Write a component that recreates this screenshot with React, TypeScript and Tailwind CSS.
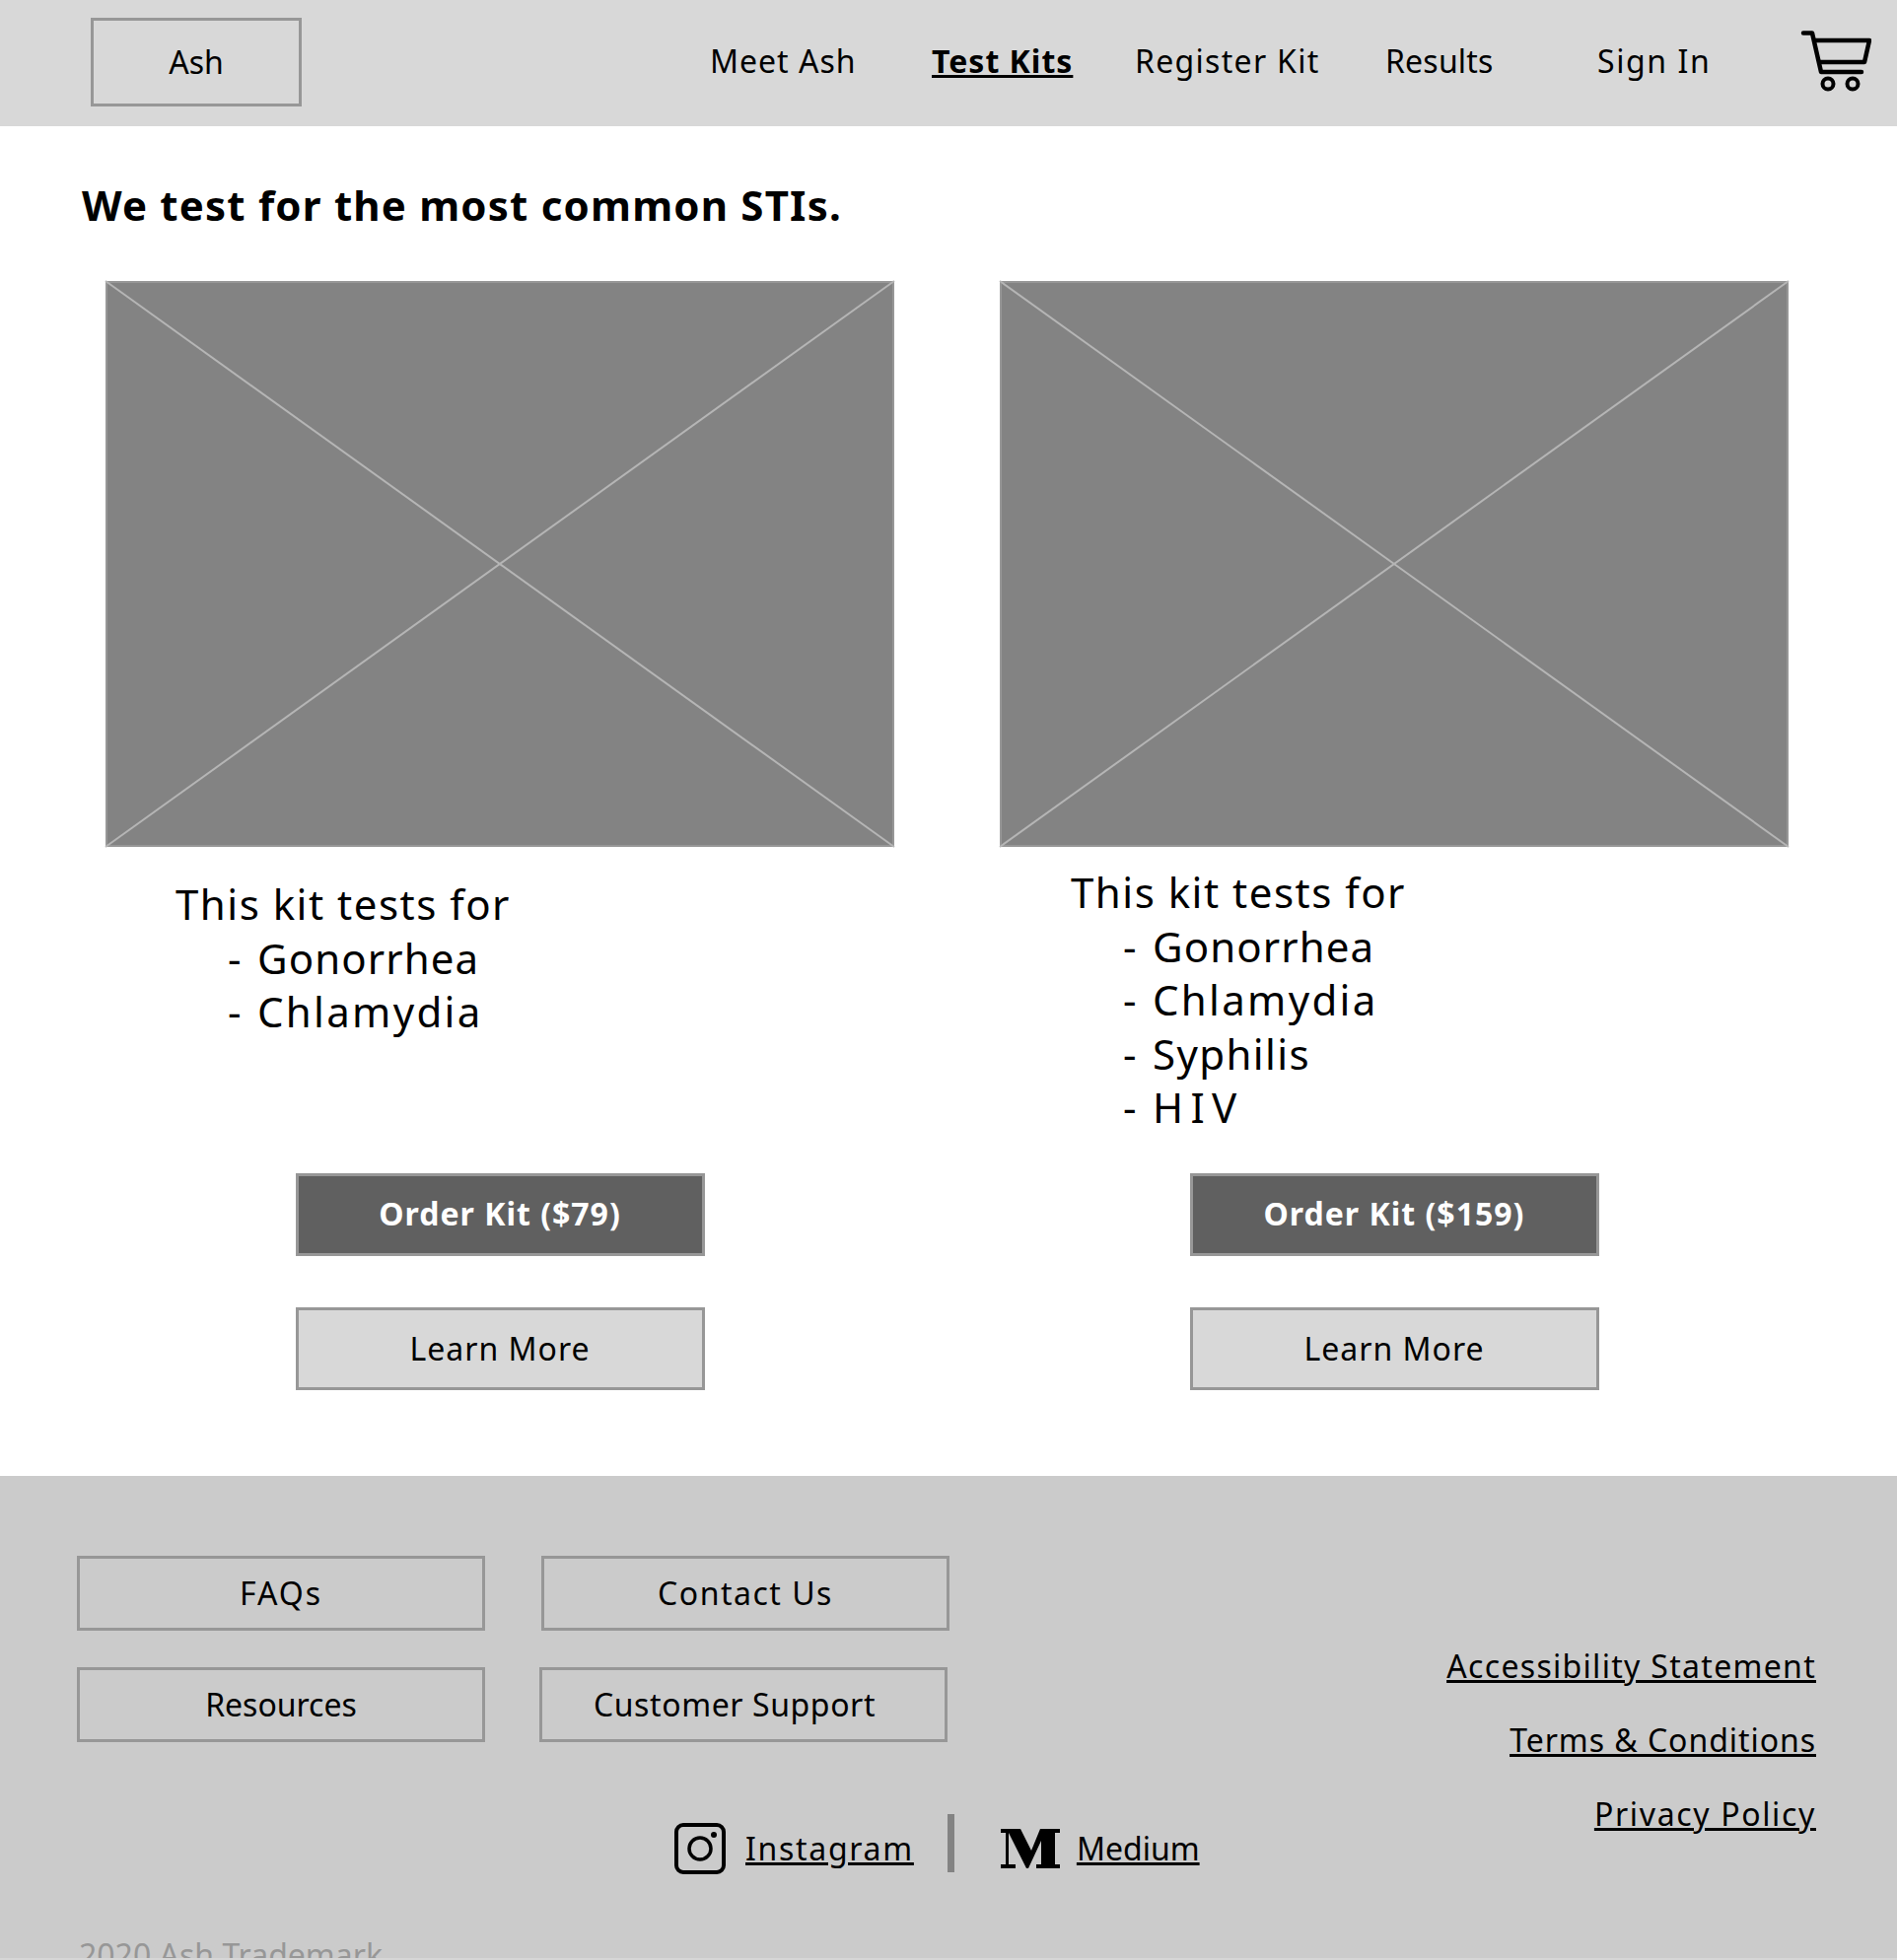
const btnBase = 'flex items-center justify-center border-[3px] border-[#979797]';

function CartIcon() {
  return (
    <svg width="72" height="64" viewBox="0 0 72 64" fill="none" stroke="#000" strokeWidth="4.5" className="-mt-[5px]">
      <path d="M3 3.5h9l9 39.5h41" strokeLinecap="round" strokeLinejoin="round" />
      <path d="M14 11h56l-5 22H20" strokeLinejoin="round" />
      <circle cx="28" cy="55" r="5.5" strokeWidth="4" />
      <circle cx="53" cy="55" r="5.5" strokeWidth="4" />
    </svg>
  );
}

function InstagramIcon() {
  return (
    <svg width="52" height="52" viewBox="0 0 52 52" fill="none" stroke="#000">
      <rect x="2" y="2" width="48" height="48" rx="7" strokeWidth="4" />
      <circle cx="26" cy="26" r="11" strokeWidth="3.5" />
      <circle cx="40" cy="12" r="3" fill="#000" stroke="none" />
    </svg>
  );
}

function MediumIcon() {
  return (
    <svg width="60" height="40" viewBox="0 0 60 40" fill="#000">
      <path d="M0 0H20L31 22L40 0H60V4H55V36H60V40H36V36H41V12L28 40H26L8 4V36H15V40H0V36H5V4H0Z" />
    </svg>
  );
}

function ImagePlaceholder() {
  return (
    <div className="h-[574px] w-[800px] border-2 border-[#979797] bg-[#838383]">
      <svg width="100%" height="100%" viewBox="0 0 796 570" preserveAspectRatio="none" stroke="#b5b5b5" strokeWidth="2" className="block overflow-visible">
        <line x1="-2" y1="-2" x2="798" y2="572" />
        <line x1="798" y1="-2" x2="-2" y2="572" />
      </svg>
    </div>
  );
}

type Item = { name: string; spacing: string };

const gonorrhea: Item = { name: 'Gonorrhea', spacing: 'tracking-[1.1px]' };
const chlamydia: Item = { name: 'Chlamydia', spacing: 'tracking-[2.3px]' };
const syphilis: Item = { name: 'Syphilis', spacing: 'tracking-[1.4px]' };
const hiv: Item = { name: 'HIV', spacing: 'tracking-[7.3px]' };

function KitCard({ price, items, textPos }: { price: string; items: Item[]; textPos: string }) {
  return (
    <div className="w-[800px]">
      <ImagePlaceholder />
      <div className={`h-[331px] text-[42px] leading-[54.6px] tracking-[1.5px] ${textPos}`}>
        <div>This kit tests for</div>
        {items.map((item) => (
          <div key={item.name} className="flex pl-[53px]">
            <span className="w-[30px]">-</span>
            <span className={item.spacing}>{item.name}</span>
          </div>
        ))}
      </div>
      <div className="flex flex-col items-center gap-[52px]">
        <button className={`${btnBase} h-[84px] w-[415px] bg-[#606060] pb-[2px] text-[32px] font-bold tracking-[1px] text-white`}>
          Order Kit ({price})
        </button>
        <button className={`${btnBase} h-[84px] w-[415px] bg-[#d8d8d8] text-[32px] tracking-[1px]`}>Learn More</button>
      </div>
    </div>
  );
}

export default function App() {
  return (
    <div className="flex h-[1988px] flex-col overflow-hidden bg-[#d6d6d6] text-black [font-family:'Noto_Sans',sans-serif]">
      <header className="flex h-[128px] shrink-0 items-center bg-[#d8d8d8]">
        <div className={`${btnBase} ml-[92px] -mt-[2px] h-[90px] w-[214px] text-[32px]`}>Ash</div>
        <nav className="ml-[414px] flex items-center pb-[5px] text-[32px] tracking-[1px]">
          <a className="w-[225px]">Meet Ash</a>
          <a className="w-[206px] font-bold"><span className="underline">Test Kits</span></a>
          <a className="w-[254px] tracking-[1.3px]">Register Kit</a>
          <a className="w-[215px] tracking-[0.2px]">Results</a>
          <a className="w-[206px] tracking-[1.6px]">Sign In</a>
        </nav>
        <CartIcon />
      </header>

      <main className="h-[1369px] shrink-0 bg-white">
        <h1 className="pl-[83px] pt-[55px] text-[42px] leading-[50px] font-bold tracking-[1.2px]">We test for the most common STIs.</h1>
        <div className="mt-[52px] flex gap-[107px] pl-[107px]">
          <KitCard price="$79" items={[gonorrhea, chlamydia]} textPos="pl-[71px] pt-[31px]" />
          <KitCard price="$159" items={[gonorrhea, chlamydia, syphilis, hiv]} textPos="pl-[72px] pt-[19px]" />
        </div>
      </main>

      <footer className="h-[489px] shrink-0 overflow-hidden bg-[#cbcbcb] text-[32px]">
        <div className="flex items-start justify-between pl-[78px] pr-[82px] pt-[81px]">
          <div className="flex flex-1 flex-col">
            <div className="flex flex-col gap-[37px]">
              <div className="flex gap-[57px]">
                <a className={`${btnBase} h-[76px] w-[414px] tracking-[2px]`}>FAQs</a>
                <a className={`${btnBase} h-[76px] w-[414px] tracking-[1.5px]`}>Contact Us</a>
              </div>
              <div className="flex gap-[55px]">
                <a className={`${btnBase} h-[76px] w-[414px]`}>Resources</a>
                <a className={`${btnBase} h-[76px] w-[414px] pr-[18px] tracking-[0.6px]`}>Customer Support</a>
              </div>
            </div>
            <div className="mt-[82px] flex h-[52px] items-center pl-[606px]">
              <InstagramIcon />
              <a className="ml-[20px] tracking-[1.7px] underline">Instagram</a>
              <div className="-mt-[9px] ml-[34px] h-[59px] w-[7px] self-start bg-[#838383]" />
              <div className="ml-[47px]"><MediumIcon /></div>
              <a className="ml-[17px] underline">Medium</a>
            </div>
          </div>
          <div className="mt-[93px] flex flex-col items-end gap-[37px] leading-[38px] tracking-[1.3px] underline">
            <a>Accessibility Statement</a>
            <a className="tracking-[0.95px]">Terms &amp; Conditions</a>
            <a className="tracking-[1.65px]">Privacy Policy</a>
          </div>
        </div>
        <div className="mt-[58px] pl-[80px] text-[#979797]">2020 Ash Trademark</div>
      </footer>
    </div>
  );
}
